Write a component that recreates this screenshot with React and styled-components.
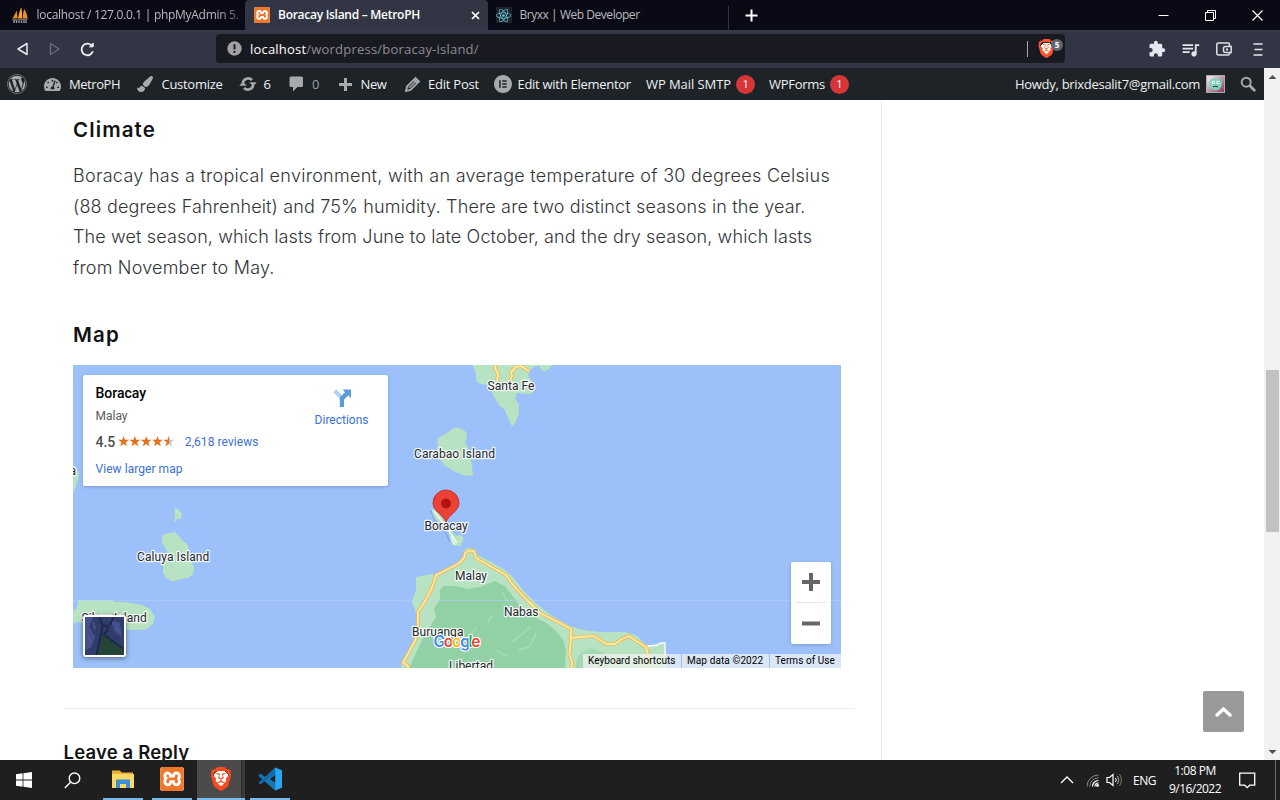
import React from "react";
import styled, { createGlobalStyle } from "styled-components";
import { FaWordpress, FaTachometerAlt, FaPaintBrush, FaReact } from "react-icons/fa";
import { MdExtension, MdQueueMusic } from "react-icons/md";
import { SiBrave, SiXampp, SiElementor } from "react-icons/si";

const GlobalStyle = createGlobalStyle`
  * { box-sizing: border-box; }
  body { margin: 0; overflow: hidden; background: #fff; }
  svg { display: block; flex: none; }
`;

const ui = `"Open Sans", "Noto Sans", sans-serif`;
const roboto = `Roboto, "Liberation Sans", sans-serif`;
const poppins = `Inter, "Open Sans", sans-serif`;

const Screen = styled.div`
  width: 1280px;
  height: 800px;
  display: flex;
  flex-direction: column;
  overflow: hidden;
  font-family: ${ui};
`;

const Text = styled.span`
  white-space: nowrap;
  letter-spacing: ${(p) => p.$ls || 0}px;
`;

/* ---------- browser chrome ---------- */

const TabStrip = styled.header`
  height: 30px;
  flex: none;
  display: flex;
  background: #0a0a16;
  font-size: 12px;
  line-height: 30px;
`;

const Tab = styled.div`
  width: ${(p) => p.$w}px;
  display: flex;
  align-items: center;
  gap: ${(p) => p.$gap || 8}px;
  padding-left: ${(p) => p.$pad}px;
  color: ${(p) => (p.$active ? "#fff" : "#b9babf")};
  background: ${(p) => (p.$active ? "#323543" : "transparent")};
  font-weight: ${(p) => (p.$active ? 600 : 400)};
  border-radius: ${(p) => (p.$active ? "4px 4px 0 0" : 0)};
  overflow: hidden;
`;

const FadeText = styled(Text)`
  mask-image: linear-gradient(90deg, #000 180px, rgba(0, 0, 0, 0.35) 204px);
`;

const ReactTile = styled.div`
  width: 16px;
  height: 16px;
  display: grid;
  place-items: center;
  background: #20232a;
  color: #61c9dc;
`;

const CloseTab = styled.svg`
  margin: 0 8px 0 auto;
`;

const TabDivider = styled.i`
  width: 1px;
  height: 24px;
  margin-top: 6px;
  background: #33343f;
`;

const NewTab = styled.svg`
  margin: 9px 0 0 16px;
`;

const WindowButtons = styled.div`
  margin-left: auto;
  width: 122px;
  display: flex;
  align-items: center;
  gap: 36px;
`;

const Toolbar = styled.div`
  height: 38px;
  flex: none;
  display: flex;
  align-items: center;
  background: linear-gradient(#3a3d4b 0, #323543 3px, #323543 100%);
`;

const NavButtons = styled.div`
  width: 216px;
  display: flex;
  align-items: center;
  gap: 19px;
  padding-left: 16px;
`;

const AddressBar = styled.div`
  width: 849px;
  height: 29px;
  margin-bottom: 1px;
  display: flex;
  align-items: center;
  padding-left: 11px;
  border-radius: 4px;
  background: #191a21;
  color: #8c8d92;
  font-size: 13px;
`;

const Host = styled(Text)`
  margin-left: 8px;
  color: #fff;
`;

const ShieldDivider = styled.i`
  width: 1px;
  height: 16px;
  margin-left: auto;
  background: #a5a6ab;
`;

const Shield = styled.div`
  position: relative;
  width: 37px;
  height: 20px;
  padding-left: 10px;
  color: #fb542b;
`;

const ShieldFace = styled.div`
  width: 17px;
  height: 20px;
  display: flex;
  justify-content: center;
  background: radial-gradient(circle at 50% 48%, #fff 0 6px, transparent 6px);
`;

const ShieldCount = styled.b`
  position: absolute;
  left: 23px;
  top: 0;
  width: 12px;
  height: 12px;
  border-radius: 50%;
  background: #63656e;
  color: #fff;
  font: 700 8px/12px ${ui};
  text-align: center;
`;

const ToolbarIcons = styled.div`
  display: flex;
  align-items: center;
  margin-left: 83px;
  color: #e6e7ee;
`;

const ToolbarSlot = styled.div`
  width: ${(p) => p.$w}px;
`;

/* ---------- page ---------- */

const Viewport = styled.div`
  height: 692px;
  flex: none;
  display: flex;
`;

const Site = styled.div`
  width: 1264px;
  display: flex;
  flex-direction: column;
  position: relative;
`;

const AdminBar = styled.nav`
  height: 32px;
  flex: none;
  display: flex;
  align-items: center;
  padding-left: 7px;
  background: #1d2327;
  color: #f0f0f1;
  font-size: 13px;
`;

const AdminItem = styled.div`
  width: ${(p) => p.$w}px;
  display: flex;
  align-items: center;
  color: ${(p) => (p.$dim ? "#9a9fa3" : "inherit")};
`;

const AdminIcon = styled.span`
  width: ${(p) => p.$w}px;
  flex: none;
  color: #a7aaad;
`;

const Count = styled.span`
  width: 19px;
  height: 19px;
  margin-left: 5px;
  border-radius: 50%;
  background: #d63638;
  color: #fff;
  font-size: 11px;
  line-height: 18px;
  text-align: center;
`;

const Account = styled.div`
  margin-left: auto;
  width: 249px;
  display: flex;
  align-items: center;
`;

const Avatar = styled.svg`
  margin: 0 15px 0 6px;
`;

const Columns = styled.div`
  flex: 1;
  min-height: 0;
  display: flex;
  overflow: hidden;
`;

const Article = styled.main`
  width: 882px;
  border-right: 1px solid #ededed;
  padding: 15px 0 0 73px;
  color: #121315;
  font-family: ${poppins};
`;

const Heading = styled.h2`
  margin: 0;
  font-size: 20.5px;
  font-weight: 600;
  line-height: 30px;
`;

const Paragraph = styled.p`
  margin: 16px 0 36.5px;
  color: #333436;
  font-size: 18px;
  font-weight: 300;
  line-height: 30.6px;
`;

const Line = styled(Text)`
  display: block;
`;

const MapFrame = styled.section`
  position: relative;
  width: 768px;
  height: 303px;
  margin-top: 15px;
  overflow: hidden;
  font-family: ${roboto};
`;

const Label = styled.text`
  font-family: ${roboto};
  font-size: 12px;
  fill: #25282c;
  stroke: rgba(255, 255, 255, 0.85);
  stroke-width: 2.6px;
  stroke-linejoin: round;
  paint-order: stroke;
  letter-spacing: ${(p) => p.$ls || 0}px;
`;

const Wordmark = styled.text`
  font-family: ${poppins};
  font-size: 15.5px;
  font-weight: 600;
  stroke: #fff;
  stroke-width: 2px;
  stroke-linejoin: round;
  paint-order: stroke;
`;

const PlaceCard = styled.div`
  position: absolute;
  left: 10px;
  top: 10px;
  width: 305px;
  height: 111px;
  padding: 9px 19.5px 0 12.5px;
  display: flex;
  justify-content: space-between;
  background: #fff;
  border-radius: 2px;
  box-shadow: 0 1px 4px -1px rgba(0, 0, 0, 0.3);
  font-size: 12px;
`;

const PlaceInfo = styled.div`
  display: flex;
  flex-direction: column;
`;

const PlaceName = styled(Text)`
  color: #000;
  font-size: 14px;
  font-weight: 500;
  line-height: 18px;
`;

const PlaceArea = styled(Text)`
  margin-top: 6px;
  color: #5b5b5b;
  line-height: 16px;
`;

const Rating = styled.div`
  display: flex;
  align-items: center;
  height: 20px;
  margin: 8px 0 9px;
  color: #4d4d4d;
  font-size: 14px;
  font-weight: 500;
`;

const Stars = styled.svg`
  margin: 0 10px 0 2.5px;
`;

const MapLink = styled(Text)`
  color: #3a6fd8;
  font-size: 12px;
  font-weight: 400;
  line-height: 16px;
`;

const Directions = styled.div`
  display: flex;
  flex-direction: column;
  align-items: center;
  gap: 4px;
  padding-top: 4px;
`;

const Satellite = styled.div`
  position: absolute;
  left: 10px;
  top: 250px;
  border: 2px solid #fff;
  border-radius: 3px;
  box-shadow: 0 1px 5px rgba(0, 0, 0, 0.5);
`;

const ZoomControl = styled.div`
  position: absolute;
  right: 10px;
  top: 197px;
  width: 40px;
  height: 82px;
  padding: 0 5px;
  background: #fff;
  border-radius: 2px;
  box-shadow: 0 1px 4px -1px rgba(0, 0, 0, 0.3);
`;

const ZoomButton = styled.div`
  height: 40px;
  display: grid;
  place-items: center;
  & + & {
    height: 42px;
    border-top: 1px solid #e6e6e6;
  }
`;

const MapFooter = styled.div`
  position: absolute;
  right: 0;
  bottom: 0;
  height: 14px;
  display: flex;
  font-size: 10px;
  line-height: 14px;
  color: #000;
`;

const FooterItem = styled(Text)`
  width: ${(p) => p.$w}px;
  padding-left: 5px;
  background: rgba(245, 245, 245, 0.7);
  & + & {
    margin-left: 1px;
  }
`;

const Divider = styled.hr`
  width: 789px;
  height: 1px;
  margin: 40px 0 0 -9px;
  border: 0;
  background: #eee;
`;

const ReplyHeading = styled(Heading)`
  margin: 28px 0 0 -9.5px;
  font-size: 18.5px;
`;

const ToTop = styled.button`
  position: absolute;
  left: 1203px;
  top: 623px;
  width: 41px;
  height: 41px;
  padding: 0;
  display: grid;
  place-items: center;
  border: 0;
  border-radius: 2px;
  background: #999;
`;

const Scrollbar = styled.div`
  width: 16px;
  display: flex;
  flex-direction: column;
  align-items: center;
  background: #f1f1f1;
`;

const Thumb = styled.div`
  width: 13px;
  height: 162px;
  margin: 285px 0 auto 1px;
  background: #c1c1c1;
`;

const ScrollArrow = styled.svg`
  transform: ${(p) => (p.$down ? "rotate(180deg)" : "none")};
`;

/* ---------- taskbar ---------- */

const Taskbar = styled.footer`
  height: 40px;
  flex: none;
  display: flex;
  align-items: stretch;
  background: #1f1f1f;
  color: #fff;
  font-size: 12px;
`;

const TaskButton = styled.div`
  width: ${(p) => p.$w}px;
  margin-right: ${(p) => p.$gap || 0}px;
  display: grid;
  place-items: center;
  border-bottom: ${(p) => (p.$open ? "2px solid #76b9ed" : "0")};
  background: ${(p) =>
    p.$active ? "linear-gradient(90deg, #4b4b4b 44px, #2b2b2b 44px, #3c3c3c 46px)" : "transparent"};
`;

const LionFace = styled.div`
  width: 24px;
  height: 24px;
  margin-right: 1px;
  display: flex;
  justify-content: center;
  color: #fb4a1e;
  background: radial-gradient(circle at 50% 48%, #fff 0 8px, transparent 8px);
`;

const XamppTile = styled.div`
  width: ${(p) => p.$s}px;
  height: ${(p) => p.$s}px;
  border-radius: ${(p) => p.$s / 8}px;
  background: #fff;
  color: #f0762b;
  overflow: hidden;
`;

const Tray = styled.div`
  margin-left: auto;
  width: 220px;
  display: flex;
  align-items: center;
`;

const TraySlot = styled.div`
  width: ${(p) => p.$w}px;
  flex: none;
`;

const Clock = styled.div`
  width: 78px;
  display: flex;
  flex-direction: column;
  align-items: center;
  line-height: 18px;
  padding-bottom: 1px;
`;

const ShowDesktop = styled.i`
  width: 1px;
  height: 40px;
  background: #6a6a6a;
`;

/* ---------- drawings ---------- */

const FleetIcon = () => (
  <svg width="18" height="18" viewBox="0 0 18 18">
    <path d="M1.500 12.500 5.800 4.500 6.600 12.500z" fill="#e58a1c" />
    <path d="M7 12.500C8 8 8.600 4 10.400 1.200 11 5 11.400 9 11 12.500z" fill="#f7a12b" />
    <path d="M11.600 12.500C12 8 12.300 5.500 13.200 3 15.300 6.500 16.400 9.500 16.600 12.500z" fill="#ef8d1a" />
    <path d="M1 13c5 1 11 0 16-.5l-1.500 2C11 14 5 15 2.500 15z" fill="#77797f" />
    <path d="M3 14.500v2.500M5.500 14.500v2.500M8 14.500v2.500M10.500 14.500v2.500M13 14.500v2.500M15 14.500v2.500" stroke="#a5a6aa" strokeWidth="1.300" />
  </svg>
);

const VsCodeIcon = () => (
  <svg width="24" height="24" viewBox="0 0 24 24">
    <path d="M17.200.5 6.900 10 2.600 6.700.8 7.700v1.600L17.200 23.500l.8-7.200-6.300-4.400L18 7.400z" fill="#1577b8" />
    <path d="M.8 16.200 2.600 17.300 18 5.500 17.300.6 6 11.300.8 15z" fill="#0f6cae" />
    <path d="M17.200.4 24 3.200v17.600l-6.800 2.800z" fill="#2aa6f0" />
  </svg>
);

const FolderIcon = () => (
  <svg width="24" height="22" viewBox="0 0 24 22">
    <path d="M1 2.500h8l1.500 2H22v15H1z" fill="#e9b034" />
    <path d="M1 6h22v14H1z" fill="#fbd765" />
    <path d="M5 20v-7.500q0-1 1-1h12q1 0 1 1V20h-4v-4H9v4z" fill="#3d90d6" />
  </svg>
);

const DirectionsIcon = () => (
  <svg width="20" height="20" viewBox="0 0 20 20">
    <path d="M1.300 4.300 4.300 1.300 10.500 7.500 8 11z" fill="#b3cef4" />
    <path d="M7.800 19v-8.500Q7.800 9.500 8.500 8.800L13 4.300 10.600 1.500H19v8.500l-2.800-2.500-4.200 4.200V19z" fill="#5b9bdc" />
  </svg>
);

const star = "M0-5.600 1.350-1.750 5.400-1.700 2.200.8 3.350 4.700 0 2.400-3.350 4.700-2.200.8-5.400-1.700-1.350-1.750z";

const StarRow = () => (
  <Stars width="57" height="13" viewBox="0 0 57 13">
    <defs>
      <linearGradient id="half">
        <stop offset=".5" stopColor="#e7711b" />
        <stop offset=".5" stopColor="#c9c3c0" />
      </linearGradient>
    </defs>
    {[0, 1, 2, 3, 4].map((i) => (
      <path key={i} d={star} transform={`translate(${5.6 + i * 11.3} 6.500)`} fill={i === 4 ? "url(#half)" : "#e7711b"} />
    ))}
  </Stars>
);

const mainRoad =
  "M409 669 407 665 403 663 410 650 415 641 418 630V612L424 603 431 590 434 582 436 575 448 569 458 564 464 558 465 553 469 550.500 474 551 476 558 490 566 506 575 513 585 527 600 540 613 556 621 571 629V638L569.500 655 572 662 571 669";
const eastRoad = "M571 638 580 637 594 636 600 640 606 644 615 644 622 639 629 636 636 641 646 647 648 655 650 669";
const northRoads = "M496 364 495 368 498 374 497 381M510 381 512 376 511 372 516 367 521 366 529 371";

const places = [
  ["Santa Fe", 487.5, 390, 0.05],
  ["Carabao Island", 414, 457.5, 0.065],
  ["Boracay", 424.5, 529.5, 0],
  ["Malay", 455, 580, 0],
  ["Nabas", 504, 616, 0],
  ["Buruanga", 412, 636, 0.03],
  ["Libertad", 449, 670, 0],
  ["Caluya Island", 137, 560.5, 0.09],
  ["Sibay Island", 81.5, 621.5, 0.1],
  ["a", 69.5, 475, 0],
];

const MapCanvas = () => (
  <svg width="768" height="303" viewBox="73 365 768 303">
    <rect x="73" y="365" width="768" height="303" fill="#9cc0f9" />
    <g fill="#b8e3c3">
      <path d="M472.500 365 476 374 476.500 381 480 384 489 385 494 397 499 405 505 410 508 418 512 426.500 515 423 518.500 415 519 404 515 399 517 393 525 394 531 394 534 391V384L528 376 530 370 534 367 541 365z" />
      <path d="M539 365 541 370 545 371.500 549 369 552 365z" />
      <path d="M438 438 447 433 452 429 457 427.500 462 429 466 432 467 438 465 442 469 450 471 460 473 475 466 476 455 472 444 465 439 458 437 450z" />
      <path d="M431 509 434 509 440 515 446 522 452 532 456 536 460 534.500 463 537V541L460 546 452 545 451 541 449 534 443 525 434 519z" />
      <path d="M73 464 76 468 79 474 78 480 76 485 74 492 73 491z" />
      <path d="M174.500 508 178 509 182 514 181 519 177 519 174 522.500 175 515z" />
      <path d="M161.500 538 164 534 171 533 174 531.500 177 534 182 540 188 545 189 552 191 559 194 568 193 574 188 578 181 579 173 581.500 166 578 163 572V565L166 559 168 553 165 547 162 543z" />
      <path d="M78 600H112L115 602H124L137 604 142 605 150 609 155 617 153 624 146 629.500 126 630 100 628 80 622 73 623V611L77 608z" />
      <path d="M465 549 469 547.500 475 550 479 556 490 561 505 570 512 576 523 590 537 604 552 616 570 626 583 630 600 632 626 632 637 636 647 646 656 644 665 643 666 668H401L402 660 412 645 414 638 417 628 418 618 413 605 412 601 416 590 416 577 431 574 435 575 450 567 460 561 464 555z" />
    </g>
    <path d="M440 590 444 586 456 586 467 589 480 587 495 581 505 586 515 599 520 606 540 620 545 622 556 631 563 640 566 650 565 668H409L415 655 425 634 436 617 434 608 440 600z" fill="#92d0a6" />
    <path d="M578 655 590 648 602 652 612 662 606 668H575z" fill="#a5d9b4" />
    <g stroke="#b4dec0" strokeWidth="2" fill="none" opacity=".6" strokeLinecap="round">
      <path d="M503 593 506 600M530 627 522 634 513 641M536 634 529 647 519 650M488 622 492 616M470 636 476 628M497 651 507 656" />
    </g>
    <path d="M430.500 510 434 519 443 528 450 542" stroke="#86a9e8" strokeWidth="1.500" fill="none" />
    <path d="M434 511 449 531 457 543M451 537 455 545" stroke="#f2f8f4" strokeWidth="1.400" fill="none" />
    <path d="M73 600.500H841" stroke="#b5d0fb" strokeWidth="1" opacity=".6" />
    <path d="M647 646 656 645.500 661 643 665 643V656" stroke="#fff" strokeWidth="1.300" fill="none" />
    <g fill="none" strokeLinejoin="round">
      <path d={mainRoad + eastRoad + northRoads} stroke="#efb850" strokeWidth="3.600" />
      <path d={mainRoad + eastRoad + northRoads} stroke="#fdeba6" strokeWidth="1.800" />
    </g>
    <path d="M446 522.500C444 515 433 511.500 433 503A13 13 0 0 1 459 503C459 511.500 448 515 446 522.500z" fill="#ea4335" stroke="#c5221f" strokeWidth=".8" />
    <circle cx="446" cy="503.500" r="5" fill="#b31412" />
    {places.map(([name, x, y, ls]) => (
      <Label key={name} x={x} y={y} $ls={ls}>
        {name}
      </Label>
    ))}
    <Wordmark x="433.500" y="647" textLength="47" fill="#4285f4">
      G<tspan fill="#ea4335">o</tspan>
      <tspan fill="#fbbc04">o</tspan>
      <tspan fill="#4285f4">g</tspan>
      <tspan fill="#34a853">l</tspan>
      <tspan fill="#ea4335">e</tspan>
    </Wordmark>
  </svg>
);

const SatelliteImage = () => (
  <svg width="39" height="38" viewBox="0 0 38 38" preserveAspectRatio="none">
    <rect width="38" height="38" fill="#303c6a" />
    <path d="M0 0H8L4 10 10 20 6 30 0 34zM24 2 34 6 36 20 30 16z" fill="#43508a" />
    <path d="M18 17 22 21 28 25 38 32V38H12L15 28z" fill="#244437" />
    <path d="M14 0 17 8 16 16 13 30 11 38M17 8 22 9 22 14 18 17 28 25 38 32M28 0 24 8" stroke="#1c2848" strokeWidth="1.800" fill="none" />
    <path d="M3 20 7 26M8 6 10 12M30 10 34 14" stroke="#5361a0" strokeWidth="1" />
  </svg>
);

const Browser = () => (
  <>
    <TabStrip>
      <Tab $w={245} $pad={11} $gap={7.5}>
        <FleetIcon />
        <FadeText $ls={-0.29}>localhost / 127.0.0.1 | phpMyAdmin 5.</FadeText>
      </Tab>
      <Tab $w={243} $pad={9} $active>
        <XamppTile $s={16}>
          <SiXampp size={16} />
        </XamppTile>
        <Text $ls={-0.275}>Boracay Island – MetroPH</Text>
        <CloseTab width="9" height="9" viewBox="0 0 9 9">
          <path d="M1 1 8 8M8 1 1 8" stroke="#fff" strokeWidth="1.700" />
        </CloseTab>
      </Tab>
      <Tab $w={240} $pad={7.5}>
        <ReactTile>
          <FaReact size={15} />
        </ReactTile>
        <Text $ls={-0.46}>Bryxx | Web Developer</Text>
      </Tab>
      <TabDivider />
      <NewTab width="13" height="13" viewBox="0 0 13 13">
        <path d="M6.500.5V12.500M.5 6.500H12.500" stroke="#fff" strokeWidth="2" />
      </NewTab>
      <WindowButtons>
        <svg width="11" height="11" viewBox="0 0 11 11">
          <path d="M.5 5.500H10.500" stroke="#fff" />
        </svg>
        <svg width="11" height="11" viewBox="0 0 11 11" fill="none" stroke="#fff">
          <path d="M.5 2.500H8.500V10.500H.5zM2.500 2.500V.5H10.500V8.500H8.500" />
        </svg>
        <svg width="11" height="11" viewBox="0 0 11 11">
          <path d="M.5.5 10.500 10.500M10.500.5.5 10.500" stroke="#fff" strokeWidth="1.100" />
        </svg>
      </WindowButtons>
    </TabStrip>
    <Toolbar>
      <NavButtons>
        <svg width="13" height="14" viewBox="0 0 13 14" fill="none" stroke="#e6e7ee" strokeWidth="1.500" strokeLinejoin="round">
          <path d="M11 1.500V12.500L2 7z" />
        </svg>
        <svg width="13" height="14" viewBox="0 0 13 14" fill="none" stroke="#6c6e79" strokeWidth="1.400" strokeLinejoin="round">
          <path d="M2.500 1.500V12.500L11 7z" />
        </svg>
        <svg width="15" height="15" viewBox="0 0 15 15" fill="none" stroke="#f4f4f8" strokeWidth="1.800">
          <path d="M12.900 9.300A5.800 5.800 0 1 1 11.500 3.300" />
          <path d="M9.500 4.800H13.200V1.200z" fill="#f4f4f8" strokeWidth="1" />
        </svg>
      </NavButtons>
      <AddressBar>
        <svg width="15" height="15" viewBox="0 0 15 15">
          <circle cx="7.500" cy="7.500" r="7.200" fill="#a0a1a5" />
          <path d="M7.500 3.200V8.500M7.500 10V11.900" stroke="#191a21" strokeWidth="1.900" />
        </svg>
        <Host $ls={0.2}>localhost</Host>
        <Text $ls={0.22}>/wordpress/boracay-island/</Text>
        <ShieldDivider />
        <Shield>
          <ShieldFace>
            <SiBrave size={19} />
          </ShieldFace>
          <ShieldCount>5</ShieldCount>
        </Shield>
      </AddressBar>
      <ToolbarIcons>
        <ToolbarSlot $w={32}>
          <MdExtension size={18} />
        </ToolbarSlot>
        <ToolbarSlot $w={36}>
          <MdQueueMusic size={21} />
        </ToolbarSlot>
        <ToolbarSlot $w={37}>
          <svg width="16" height="14" viewBox="0 0 16 14" fill="none" stroke="#dfe0e7" strokeWidth="1.500">
            <path d="M13.500 4.500V2.500Q13.500 1 12 1H2.500Q.8 1 .8 2.500V11.500Q.8 13 2.500 13H12Q13.500 13 13.500 11.500V10.500" />
            <path d="M15.200 4.500H9.500Q7.500 4.500 7.500 6.500V8.500Q7.500 10.500 9.500 10.500H15.200z" />
            <path d="M10 7.500H12" strokeWidth="1.800" />
          </svg>
        </ToolbarSlot>
        <svg width="10" height="13" viewBox="0 0 10 13">
          <path d="M.5 1H9.500M1.500 6.500H9.500M.5 12H9.500" stroke="#e6e7ee" strokeWidth="1.400" />
        </svg>
      </ToolbarIcons>
    </Toolbar>
  </>
);

const SiteAdminBar = () => (
  <AdminBar>
    <AdminItem $w={37}>
      <AdminIcon $w={20}>
        <FaWordpress size={20} />
      </AdminIcon>
    </AdminItem>
    <AdminItem $w={93}>
      <AdminIcon $w={25}>
        <FaTachometerAlt size={17} />
      </AdminIcon>
      <Text $ls={-0.45}>MetroPH</Text>
    </AdminItem>
    <AdminItem $w={102}>
      <AdminIcon $w={24.5}>
        <FaPaintBrush size={16} />
      </AdminIcon>
      <Text $ls={-0.28}>Customize</Text>
    </AdminItem>
    <AdminItem $w={50}>
      <AdminIcon $w={24.5}>
        <svg width="18" height="16" viewBox="0 0 18 16" fill="none" stroke="#a7aaad" strokeWidth="2.600">
          <path d="M3.800 7A5.300 5.300 0 0 1 13 4.200M14.200 9A5.300 5.300 0 0 1 5 11.800" />
          <path d="M10.200 6.300H17.800L14.200 10.300zM7.800 9.700H.2L3.800 5.700z" fill="#a7aaad" stroke="none" />
        </svg>
      </AdminIcon>
      <Text>6</Text>
    </AdminItem>
    <AdminItem $w={49} $dim>
      <AdminIcon $w={23}>
        <svg width="15" height="16" viewBox="0 0 15 16">
          <path d="M2 .5H12.500Q14 .5 14 2V9.500Q14 11 12.500 11H8.500L4 15.500V11H2Q.5 11 .5 9.500V2Q.5.5 2 .5z" fill="#a7aaad" />
        </svg>
      </AdminIcon>
      <Text>0</Text>
    </AdminItem>
    <AdminItem $w={66}>
      <AdminIcon $w={22.5}>
        <svg width="15" height="15" viewBox="0 0 15 15">
          <path d="M7.500 1V14M1 7.500H14" stroke="#a7aaad" strokeWidth="3" />
        </svg>
      </AdminIcon>
      <Text $ls={-0.39}>New</Text>
    </AdminItem>
    <AdminItem $w={90}>
      <AdminIcon $w={24}>
        <svg width="17" height="17" viewBox="0 0 17 17" fill="none" stroke="#a7aaad" strokeWidth="1.900">
          <path d="M2 15 3 10.500 11.500 2 15 5.500 6.500 14zM10 3.500 13.500 7" />
          <path d="M5 12 12 5" strokeWidth="1.400" />
        </svg>
      </AdminIcon>
      <Text $ls={-0.22}>Edit Post</Text>
    </AdminItem>
    <AdminItem $w={152}>
      <AdminIcon $w={23.5}>
        <SiElementor size={18} />
      </AdminIcon>
      <Text $ls={-0.28}>Edit with Elementor</Text>
    </AdminItem>
    <AdminItem $w={123}>
      <Text $ls={-0.07}>WP Mail SMTP</Text>
      <Count>1</Count>
    </AdminItem>
    <AdminItem $w={90}>
      <Text $ls={-0.27}>WPForms</Text>
      <Count>1</Count>
    </AdminItem>
    <Account>
      <Text $ls={-0.29}>Howdy, brixdesalit7@gmail.com</Text>
      <Avatar width="19" height="18" viewBox="0 0 19 18">
        <defs>
          <linearGradient id="avatarBg" x1="0" y1="0" x2="1" y2="1">
            <stop offset=".2" stopColor="#e6d5e0" />
            <stop offset="1" stopColor="#8a2c62" />
          </linearGradient>
        </defs>
        <rect x=".5" y=".5" width="18" height="17" fill="url(#avatarBg)" stroke="#a7aaad" />
        <circle cx="9.500" cy="9" r="6.300" fill="#83d3b8" />
        <circle cx="7.300" cy="7.500" r="1.700" fill="#e9fff8" />
        <circle cx="12" cy="7.500" r="1.700" fill="#e9fff8" />
        <path d="M7.500 7.500H8M12 7.500H12.600M7 12Q9.500 10.500 12 12" stroke="#1d4a45" strokeWidth="1.100" fill="none" />
      </Avatar>
      <svg width="16" height="16" viewBox="0 0 16 16" fill="none" stroke="#a7aaad">
        <circle cx="6.200" cy="6.200" r="4.500" strokeWidth="2" />
        <path d="M9.800 9.800 14.300 14.300" strokeWidth="2.800" strokeLinecap="round" />
      </svg>
    </Account>
  </AdminBar>
);

const PlaceMap = () => (
  <MapFrame>
    <MapCanvas />
    <PlaceCard>
      <PlaceInfo>
        <PlaceName>Boracay</PlaceName>
        <PlaceArea>Malay</PlaceArea>
        <Rating>
          <Text>4.5</Text>
          <StarRow />
          <MapLink $ls={0.07}>2,618 reviews</MapLink>
        </Rating>
        <MapLink $ls={0.05}>View larger map</MapLink>
      </PlaceInfo>
      <Directions>
        <DirectionsIcon />
        <MapLink>Directions</MapLink>
      </Directions>
    </PlaceCard>
    <Satellite>
      <SatelliteImage />
    </Satellite>
    <ZoomControl>
      <ZoomButton>
        <svg width="18" height="18" viewBox="0 0 18 18">
          <path d="M9 0V18M0 9H18" stroke="#666" strokeWidth="4" />
        </svg>
      </ZoomButton>
      <ZoomButton>
        <svg width="18" height="18" viewBox="0 0 18 18">
          <path d="M0 9.500H18" stroke="#666" strokeWidth="4" />
        </svg>
      </ZoomButton>
    </ZoomControl>
    <MapFooter>
      <FooterItem $w={98} $ls={0.04}>Keyboard shortcuts</FooterItem>
      <FooterItem $w={87} $ls={0.1}>Map data ©2022</FooterItem>
      <FooterItem $w={71} $ls={0.06}>Terms of Use</FooterItem>
    </MapFooter>
  </MapFrame>
);

const Desktop = () => (
  <Taskbar>
    <TaskButton $w={48}>
      <svg width="16" height="16" viewBox="0 0 16 16" fill="#fff">
        <path d="M0 2.200 6.600 1.300V7.600H0zM7.400 1.200 16 0V7.600H7.400zM0 8.400H6.600V14.700L0 13.800zM7.400 8.400H16V16L7.400 14.800z" />
      </svg>
    </TaskButton>
    <TaskButton $w={48} $gap={7}>
      <svg width="17" height="17" viewBox="0 0 17 17" fill="none" stroke="#fff" strokeWidth="1.400">
        <circle cx="10.500" cy="6.300" r="5.300" />
        <path d="M6.600 10.200.8 16" />
      </svg>
    </TaskButton>
    <TaskButton $w={40} $gap={9} $open>
      <FolderIcon />
    </TaskButton>
    <TaskButton $w={40} $gap={5} $open>
      <XamppTile $s={24}>
        <SiXampp size={24} />
      </XamppTile>
    </TaskButton>
    <TaskButton $w={48} $gap={5} $open $active>
      <LionFace>
        <SiBrave size={24} />
      </LionFace>
    </TaskButton>
    <TaskButton $w={40} $open>
      <VsCodeIcon />
    </TaskButton>
    <Tray>
      <TraySlot $w={26}>
        <svg width="14" height="8" viewBox="0 0 14 8">
          <path d="M1 7 7 1 13 7" stroke="#fff" strokeWidth="1.300" fill="none" />
        </svg>
      </TraySlot>
      <TraySlot $w={20}>
        <svg width="13" height="13" viewBox="0 0 13 13" fill="none">
          <path d="M1 12.500A11.500 11.500 0 0 1 12.500 1M3.800 12.500A8.700 8.700 0 0 1 12.500 3.800" stroke="#8b8b8b" />
          <path d="M6.500 12.500A6 6 0 0 1 12.500 6.500" stroke="#fff" strokeWidth="1.200" />
          <path d="M9 12.500A3.500 3.500 0 0 1 12.500 9" stroke="#fff" strokeWidth="1.200" />
          <circle cx="11.500" cy="11.500" r="1.400" fill="#fff" />
        </svg>
      </TraySlot>
      <TraySlot $w={27}>
        <svg width="17" height="14" viewBox="0 0 17 14" fill="none" stroke="#fff">
          <path d="M1 4.500H3.500L7 1.500V12.500L3.500 9.500H1z" strokeWidth="1.200" />
          <path d="M9.500 5Q10.800 7 9.500 9" />
          <path d="M11.500 3Q14 7 11.500 11" stroke="#aaa" />
          <path d="M13.500 1Q17.300 7 13.500 13" stroke="#777" />
        </svg>
      </TraySlot>
      <TraySlot $w={23}>
        <Text $ls={-0.48}>ENG</Text>
      </TraySlot>
      <Clock>
        <Text $ls={-0.48}>1:08 PM</Text>
        <Text $ls={-0.54}>9/16/2022</Text>
      </Clock>
      <TraySlot $w={36}>
        <svg width="30" height="17" viewBox="-5 0 30 17" fill="none" stroke="#fff" strokeWidth="1.300">
          <path d="M.7 1.200H15.700V13.200H10.700L8.200 15.700 5.700 13.200H.7z" />
        </svg>
      </TraySlot>
      <TraySlot $w={5} />
      <ShowDesktop />
    </Tray>
  </Taskbar>
);

export default function App() {
  return (
    <Screen>
      <GlobalStyle />
      <Browser />
      <Viewport>
        <Site>
          <SiteAdminBar />
          <Columns>
            <Article>
              <Heading>
                <Text $ls={1.1}>Climate</Text>
              </Heading>
              <Paragraph>
                <Line $ls={0.285}>Boracay has a tropical environment, with an average temperature of 30 degrees Celsius</Line>
                <Line $ls={0.15}>(88 degrees Fahrenheit) and 75% humidity. There are two distinct seasons in the year.</Line>
                <Line $ls={0.126}>The wet season, which lasts from June to late October, and the dry season, which lasts</Line>
                <Line $ls={0.2}>from November to May.</Line>
              </Paragraph>
              <Heading>
                <Text $ls={1.1}>Map</Text>
              </Heading>
              <PlaceMap />
              <Divider />
              <ReplyHeading>
                <Text $ls={0.18}>Leave a Reply</Text>
              </ReplyHeading>
            </Article>
          </Columns>
          <ToTop>
            <svg width="18" height="12" viewBox="0 0 18 12">
              <path d="M2 9 8.500 3 15 9" stroke="#fff" strokeWidth="3.400" strokeLinecap="round" fill="none" />
            </svg>
          </ToTop>
        </Site>
        <Scrollbar>
          <ScrollArrow width="16" height="17" viewBox="0 0 16 17">
            <path d="M4.500 11 8.500 7 12.500 11z" fill="#505050" />
          </ScrollArrow>
          <Thumb />
          <ScrollArrow width="16" height="17" viewBox="0 0 16 17" $down>
            <path d="M3.500 10 7.500 6 11.500 10z" fill="#505050" />
          </ScrollArrow>
        </Scrollbar>
      </Viewport>
      <Desktop />
    </Screen>
  );
}
